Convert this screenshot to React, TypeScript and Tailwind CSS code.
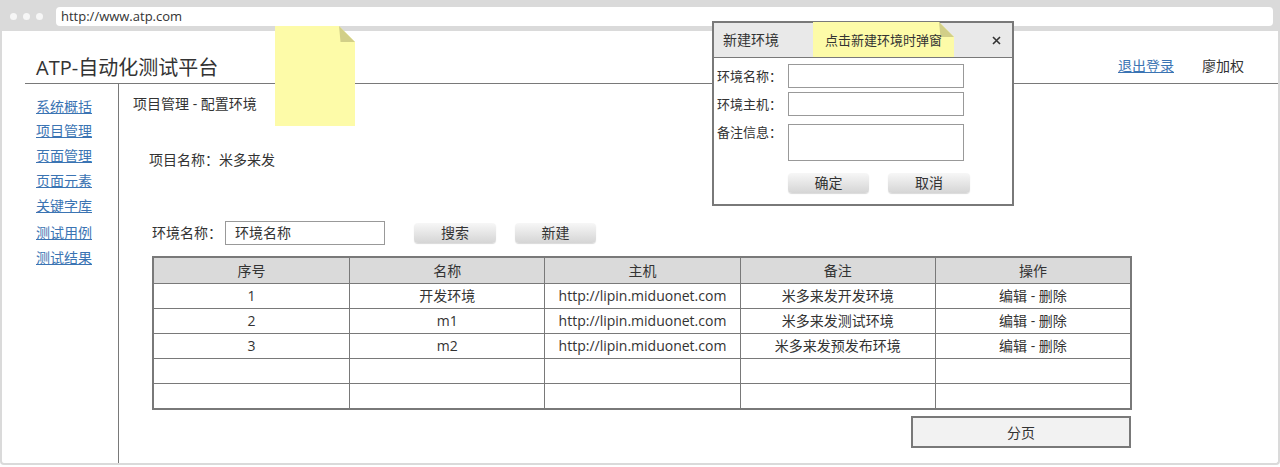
import React from 'react';

function Sticky({ className, fold, children }: { className: string; fold: number; children?: React.ReactNode }) {
  return (
    <div className={className}>
      <div
        className="absolute inset-0 bg-[#fdfba8]"
        style={{ clipPath: `polygon(0 0, calc(100% - ${fold}px) 0, 100% ${fold}px, 100% 100%, 0 100%)` }}
      />
      <svg className="absolute top-0 right-0" width={fold} height={fold} viewBox={`0 0 ${fold} ${fold}`}>
        <polygon points={`0,0 1.5,${fold} ${fold},${fold}`} fill="#d2cf88" />
      </svg>
      {children}
    </div>
  );
}

function Btn({ label, className }: { label: string; className: string }) {
  return (
    <div
      className={`flex items-center justify-center h-[20px] rounded-[4px] bg-gradient-to-b from-[#f7f7f7] to-[#d5d5d5] shadow-[0_1px_1px_rgba(0,0,0,0.15)] text-[14px] leading-[20px] text-[#333333] ${className}`}
    >
      {label}
    </div>
  );
}

export default function App() {
  const rows = [
    ['1', '开发环境', 'http://lipin.miduonet.com', '米多来发开发环境', '编辑 - 删除'],
    ['2', 'm1', 'http://lipin.miduonet.com', '米多来发测试环境', '编辑 - 删除'],
    ['3', 'm2', 'http://lipin.miduonet.com', '米多来发预发布环境', '编辑 - 删除'],
    ['', '', '', '', ''],
    ['', '', '', '', ''],
  ];
  const head = ['序号', '名称', '主机', '备注', '操作'];
  const links = [
    ['系统概括', 'mt-0'],
    ['项目管理', 'mt-[4px]'],
    ['页面管理', 'mt-[5px]'],
    ['页面元素', 'mt-[5px]'],
    ['关键字库', 'mt-[5px]'],
    ['测试用例', 'mt-[7px]'],
    ['测试结果', 'mt-[5px]'],
  ];
  return (
    <div className="relative w-[1280px] h-[467px] bg-white overflow-hidden font-['Open_Sans','Noto_Sans_CJK_SC',sans-serif] text-[#333333]">
      <div className="w-[1280px] h-[465px] flex flex-col border-x-2 border-b-2 border-[#dadada] rounded-b-[4px]">
        {/* browser bar */}
        <div className="h-[31px] shrink-0 bg-[#dadada] flex items-start pt-[7px] pl-[8px] pr-[5px]">
          <div className="flex gap-[6px] mt-[6px]">
            <div className="w-[7px] h-[7px] rounded-full bg-[#f6f6f6]" />
            <div className="w-[7px] h-[7px] rounded-full bg-[#f6f6f6]" />
            <div className="w-[7px] h-[7px] rounded-full bg-[#f6f6f6]" />
          </div>
          <div className="ml-[13px] flex-1 h-[19px] bg-white rounded-[4px] pl-[5px] text-[13px] leading-[19px] text-[#333333]">
            http://www.atp.com
          </div>
        </div>

        {/* header */}
        <div className="h-[53px] shrink-0 ml-[23px] border-b border-[#797979] flex items-start justify-between">
          <div className="pl-[11px] pt-[23px] text-[20px] leading-[28px] text-[#333333]">ATP-自动化测试平台</div>
          <div className="flex items-center gap-[28px] pt-[25px] pr-[34px] text-[14px] leading-[20px]">
            <span className="underline text-[#3b74b3]">退出登录</span>
            <span className="text-[#333333]">廖加权</span>
          </div>
        </div>

        {/* body */}
        <div className="flex flex-1">
          <div className="w-[117px] shrink-0 border-r border-[#797979] pl-[34px] pt-[13px] flex flex-col">
            {links.map(([t, m]) => (
              <div key={t} className={`${m} h-[20px] text-[14px] leading-[20px] underline text-[#3b74b3]`}>
                {t}
              </div>
            ))}
          </div>

          <div className="flex-1 flex flex-col">
            <div className="mt-[10px] ml-[14px] text-[14px] leading-[20px] whitespace-pre">项目管理 - 配置环境</div>
            <div className="mt-[36px] ml-[30px] text-[14px] leading-[20px]">项目名称：米多来发</div>

            <div className="mt-[51px] ml-[33px] h-[24px] flex items-center">
              <div className="w-[73px] text-[14px] leading-[20px]">环境名称：</div>
              <div className="w-[160px] h-[24px] border border-[#999999] pl-[9px] text-[14px] leading-[22px]">环境名称</div>
              <Btn label="搜索" className="ml-[29px] w-[82px]" />
              <Btn label="新建" className="ml-[19px] w-[81px]" />
            </div>

            <div className="mt-[11px] ml-[33px] w-[980px] border-2 border-[#797979] text-[14px]">
              <div className="grid grid-cols-5 h-[25px] bg-[#dadada]">
                {head.map((h, i) => (
                  <div key={h} className={`flex items-center justify-center ${i > 0 ? 'border-l border-[#797979]' : ''}`}>
                    {h}
                  </div>
                ))}
              </div>
              {rows.map((r, ri) => (
                <div key={ri} className="grid grid-cols-5 h-[25px] border-t border-[#797979]">
                  {r.map((c, i) => (
                    <div key={i} className={`flex items-center justify-center pb-[2px] ${i > 0 ? 'border-l border-[#797979]' : ''}`}>
                      {c}
                    </div>
                  ))}
                </div>
              ))}
            </div>

            <div className="mt-[6px] ml-[33px] w-[980px] flex justify-end">
              <div className="mr-[1px] w-[220px] h-[32px] border-2 border-[#797979] bg-[#f2f2f2] flex items-center justify-center text-[14px]">
                分页
              </div>
            </div>
          </div>
        </div>
      </div>

      {/* sticky note */}
      <Sticky className="absolute left-[275px] top-[26px] w-[80px] h-[100px]" fold={16} />

      {/* modal */}
      <div className="absolute left-[712px] top-[21px] w-[302px] h-[185px] border-2 border-[#797979] bg-white flex flex-col">
        <div className="relative h-[35px] shrink-0 bg-[#e9e9e9] border-b border-[#797979] flex items-center justify-between pl-[9px] pr-[11px]">
          <span className="text-[14px] leading-[20px]">新建环境</span>
          <svg width="9" height="9" viewBox="0 0 9 9">
            <path d="M1 1 L8 8 M8 1 L1 8" stroke="#333333" strokeWidth="1.6" />
          </svg>
          <Sticky className="absolute left-[99px] top-[-1px] w-[141px] h-[35px]" fold={15}>
            <div className="relative h-full flex items-center pl-[12px] text-[13px] leading-[18px] text-[#333333]">
              点击新建环境时弹窗
            </div>
          </Sticky>
        </div>
        <div className="flex flex-col pl-[3px]">
          <div className="mt-[6px] flex items-center h-[24px]">
            <div className="w-[71px] text-[13px] leading-[20px]">环境名称：</div>
            <div className="w-[176px] h-[24px] border border-[#999999]" />
          </div>
          <div className="mt-[4px] flex items-center h-[24px]">
            <div className="w-[71px] text-[13px] leading-[20px]">环境主机：</div>
            <div className="w-[176px] h-[24px] border border-[#999999]" />
          </div>
          <div className="mt-[6px] flex items-start">
            <div className="w-[71px] text-[13px] leading-[20px]">备注信息：</div>
            <div className="mt-[2px] w-[176px] h-[37px] border border-[#999999]" />
          </div>
          <div className="mt-[12px] flex">
            <Btn label="确定" className="ml-[71px] w-[81px]" />
            <Btn label="取消" className="ml-[19px] w-[82px]" />
          </div>
        </div>
      </div>
    </div>
  );
}
